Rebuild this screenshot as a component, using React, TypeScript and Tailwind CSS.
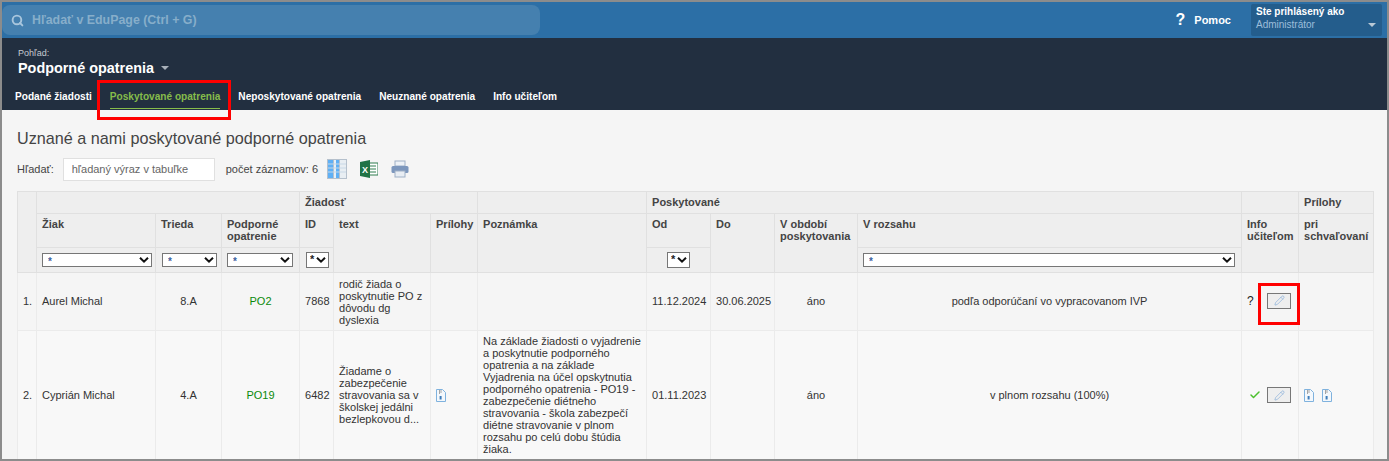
import React from 'react';
import { Search, Pencil, Check } from 'lucide-react';

const Caret = ({ className }: { className: string }) => (
  <span className={`inline-block w-0 h-0 border-x-[4px] border-x-transparent border-t-[4px] ${className}`} />
);

const FilterSelect = ({ className, narrow }: { className: string; narrow?: boolean }) => (
  <div className={`relative ${narrow ? 'h-[16px]' : 'h-[14px]'} ${className}`}>
    <select
      className={`appearance-none w-full h-full bg-white border border-[#767676] block leading-none outline-none ${
        narrow ? 'pl-[3px] pb-[2px] text-[11px] text-[#222]' : 'pl-[5px] pt-[3px] text-[10px] text-[#3b5fa0]'
      }`}
    >
      <option>*</option>
    </select>
    <svg className="absolute right-[3px] top-1/2 -translate-y-1/2 pointer-events-none" width="10" height="7" viewBox="0 0 10 7">
      <path d="M1 1.2l4 4 4-4" fill="none" stroke="#111" strokeWidth="2" />
    </svg>
  </div>
);

const AttachIcon = () => (
  <svg width="10" height="13" viewBox="0 0 10 13" className="inline-block">
    <path d="M.5.5h6l3 3v9h-9z" fill="#f4f8fc" stroke="#7fb2de" />
    <path d="M3.5 1v4M5 1v3" stroke="#a5a5a5" strokeWidth="1" />
    <rect x="3.6" y="7" width="2" height="3.5" fill="#3f7dba" />
  </svg>
);

const EditButton = () => (
  <button className="w-[24px] h-[16px] border border-[#777] bg-[#eeeeee] inline-flex items-center justify-center">
    <Pencil size={11} strokeWidth={1.2} className="text-[#6f9fd4]" />
  </button>
);

const th = 'border border-[#e0e0e0] bg-[#eeeeee] text-left align-top font-bold text-[#444] px-[5px] pt-[4px] leading-[12px]';
const td = 'border border-[#ebebeb] px-[5px] align-middle leading-[12px]';
const tdUp = `${td} pb-[2px]`;

const App = () => {
  return (
    <div className="w-[1389px] h-[461px] overflow-hidden border-2 border-[#8c8c8c] bg-[#f5f5f5] flex flex-col font-['Liberation_Sans',Arial,sans-serif] text-[11px] text-[#333]">
      {/* top bar */}
      <div className="h-[36px] shrink-0 bg-[#2c6fa6] flex items-center pr-[5px]">
        <div className="w-[538px] h-[30px] rounded-[8px] bg-[#4580af] flex items-center pl-[9px] gap-[8px]">
          <Search size={13} strokeWidth={3.5} className="text-[#a9c6dd]" />
          <span className="text-[#87aeca] font-bold text-[12.4px]">Hľadať v EduPage (Ctrl + G)</span>
        </div>
        <div className="ml-auto flex items-center gap-[9px] mr-[20px] text-white font-bold">
          <span className="text-[16px] leading-none">?</span>
          <span className="text-[11px]">Pomoc</span>
        </div>
        <div className="w-[131px] h-[32px] bg-[#245d8c] rounded-[2px] px-[5px] pt-[1px]">
          <div className="text-white font-bold text-[10px] leading-[13px]">Ste prihlásený ako</div>
          <div className="text-[#9dbedb] text-[10px] leading-[14px] flex items-center justify-between pr-[1px]">
            Administrátor
            <Caret className="border-t-[#b9c9d6]" />
          </div>
        </div>
      </div>

      {/* view header */}
      <div className="h-[72px] shrink-0 bg-[#222f40] pt-[10px] text-white">
        <div className="pl-[16px] text-[#c5cad0] text-[9px] leading-[11px]">Pohľad:</div>
        <div className="pl-[16px] flex items-center gap-[7px] font-bold text-[14.4px] leading-[18px]">
          Podporné opatrenia
          <Caret className="border-t-[#a8b0b9]" />
        </div>
        <div className="flex items-start gap-[18px] pl-[13px] mt-[11px] font-bold text-[10.1px]">
          <span className="leading-[18px]">Podané žiadosti</span>
          <span className="leading-[18px] h-[21px] border-b border-[#86bc4b] text-[#86bc4b]">Poskytované opatrenia</span>
          <span className="leading-[18px]">Neposkytované opatrenia</span>
          <span className="leading-[18px]">Neuznané opatrenia</span>
          <span className="leading-[18px]">Info učiteľom</span>
        </div>
      </div>

      {/* content */}
      <div className="flex-1 pl-[15px] pt-[17px]">
        <h1 className="text-[16.2px] leading-[22px] text-[#444]">Uznané a nami poskytované podporné opatrenia</h1>
        <div className="flex items-center mt-[8px] h-[24px] text-[#444]">
          <span>Hľadať:</span>
          <input
            className="ml-[9px] w-[152px] h-[23px] bg-white border border-[#e0e0e0] px-[8px] text-[11px] placeholder:text-[#666] outline-none"
            placeholder="hľadaný výraz v tabuľke"
          />
          <span className="ml-[11px]">počet záznamov: 6</span>
          <svg width="20" height="20" viewBox="0 0 20 20" className="ml-[9px]">
            <rect width="20" height="20" fill="#b5c0cc" />
            <rect x="1" y="1" width="5" height="18" fill="#5fb0f5" />
            <rect x="7" y="1" width="5" height="18" fill="#e6f0f8" />
            <rect x="9" y="1" width="3" height="18" fill="#5fb0f5" />
            <rect x="13" y="1" width="6" height="18" fill="#e8eef3" />
            <path d="M1 5h18M1 9h18M1 13h18" stroke="#c8d8e6" />
          </svg>
          <svg width="18" height="18" viewBox="0 0 18 18" className="ml-[13px]">
            <rect x="7" y="3" width="11" height="12" fill="#fff" stroke="#2e7d4f" />
            <path d="M10 6h6M10 9h6M10 12h6" stroke="#2e7d4f" />
            <path d="M0 2l10-2v18L0 16z" fill="#217346" />
            <text x="2" y="12.5" fontSize="9" fontWeight="bold" fill="#fff">X</text>
          </svg>
          <svg width="18" height="18" viewBox="0 0 18 18" className="ml-[13px]">
            <rect x="4" y="1" width="10" height="5" fill="#eef2f7" stroke="#9fb0c6" />
            <rect x="0.5" y="6" width="17" height="7" rx="1.5" fill="#7d97bd" />
            <rect x="4" y="11" width="10" height="6" fill="#e8edf3" stroke="#9fb0c6" />
          </svg>
        </div>

        <table className="table-fixed border-collapse w-[1356px] mt-[10px] bg-[#f5f5f5]">
          <colgroup>
            <col className="w-[19px]" />
            <col className="w-[119px]" />
            <col className="w-[66px]" />
            <col className="w-[78px]" />
            <col className="w-[34px]" />
            <col className="w-[97px]" />
            <col className="w-[47px]" />
            <col className="w-[169px]" />
            <col className="w-[64px]" />
            <col className="w-[64px]" />
            <col className="w-[83px]" />
            <col className="w-[384px]" />
            <col className="w-[57px]" />
            <col className="w-[75px]" />
          </colgroup>
          <thead>
            <tr className="h-[22px]">
              <th rowSpan={3} className={th}></th>
              <th colSpan={3} className={th}></th>
              <th colSpan={3} className={th}>Žiadosť</th>
              <th className={th}></th>
              <th colSpan={4} className={th}>Poskytované</th>
              <th className={th}></th>
              <th className={th}>Prílohy</th>
            </tr>
            <tr className="h-[34px]">
              <th className={th}>Žiak</th>
              <th className={th}>Trieda</th>
              <th className={th}>Podporné opatrenie</th>
              <th className={th}>ID</th>
              <th rowSpan={2} className={th}>text</th>
              <th rowSpan={2} className={th}>Prílohy</th>
              <th rowSpan={2} className={th}>Poznámka</th>
              <th className={th}>Od</th>
              <th rowSpan={2} className={th}>Do</th>
              <th rowSpan={2} className={th}>V období poskytovania</th>
              <th className={th}>V rozsahu</th>
              <th rowSpan={2} className={th}>Info učiteľom</th>
              <th rowSpan={2} className={th}>pri schvaľovaní</th>
            </tr>
            <tr className="h-[25px]">
              <th className="border border-[#e0e0e0] bg-[#eeeeee]"><FilterSelect className="w-[110px] ml-[5px]" /></th>
              <th className="border border-[#e0e0e0] bg-[#eeeeee]"><FilterSelect className="w-[55px] ml-[6px]" /></th>
              <th className="border border-[#e0e0e0] bg-[#eeeeee]"><FilterSelect className="w-[66px] ml-[5px]" /></th>
              <th className="border border-[#e0e0e0] bg-[#eeeeee]"><FilterSelect narrow className="w-[23px] ml-[6px]" /></th>
              <th className="border border-[#e0e0e0] bg-[#eeeeee]"><FilterSelect narrow className="w-[23px] ml-[20px]" /></th>
              <th className="border border-[#e0e0e0] bg-[#eeeeee]"><FilterSelect className="w-[372px] ml-[5px]" /></th>
            </tr>
          </thead>
          <tbody>
            <tr className="h-[58px] bg-[#f5f5f5]">
              <td className={tdUp}>1.</td>
              <td className={tdUp}>Aurel Michal</td>
              <td className={`${tdUp} text-center`}>8.A</td>
              <td className={`${tdUp} text-center text-[#0a8a0a]`}>PO2</td>
              <td className={tdUp}>7868</td>
              <td className={td}>rodič žiada o poskytnutie PO z dôvodu dg dyslexia</td>
              <td className={td}></td>
              <td className={td}></td>
              <td className={tdUp}>11.12.2024</td>
              <td className={tdUp}>30.06.2025</td>
              <td className={`${tdUp} text-center`}>áno</td>
              <td className={`${tdUp} text-center`}>podľa odporúčaní vo vypracovanom IVP</td>
              <td className={tdUp}>
                <div className="flex items-center justify-between pr-[2px]">
                  <span className="text-[12px] text-[#222]">?</span>
                  <EditButton />
                </div>
              </td>
              <td className={td}></td>
            </tr>
            <tr className="bg-[#f8f8f8]">
              <td className={td}>2.</td>
              <td className={td}>Cyprián Michal</td>
              <td className={`${td} text-center`}>4.A</td>
              <td className={`${td} text-center text-[#0a8a0a]`}>PO19</td>
              <td className={td}>6482</td>
              <td className={td}>Žiadame o zabezpečenie stravovania sa v školskej jedálni bezlepkovou d...</td>
              <td className={td}><AttachIcon /></td>
              <td className={`${td} py-[4px]`}>
                Na základe žiadosti o vyjadrenie a poskytnutie podporného opatrenia a na základe Vyjadrenia na účel opskytnutia podporného opatrenia - PO19 - zabezpečenie diétneho stravovania - škola zabezpečí diétne stravovanie v plnom rozsahu po celú dobu štúdia žiaka.
              </td>
              <td className={td}>01.11.2023</td>
              <td className={td}></td>
              <td className={`${td} text-center`}>áno</td>
              <td className={`${td} text-center`}>v plnom rozsahu (100%)</td>
              <td className={td}>
                <div className="flex items-center justify-between pr-[2px]">
                  <Check size={12} strokeWidth={3} className="text-[#4cc02e] ml-[2px]" />
                  <EditButton />
                </div>
              </td>
              <td className={td}>
                <div className="flex gap-[8px]">
                  <AttachIcon />
                  <AttachIcon />
                </div>
              </td>
            </tr>
          </tbody>
        </table>
      </div>

      {/* annotation marks */}
      <div className="absolute left-[97px] top-[80px] w-[134px] h-[40px] border-[3px] border-[#ff0000] pointer-events-none" />
      <div className="absolute left-[1258px] top-[283px] w-[42px] h-[42px] border-[3px] border-[#ff0000] pointer-events-none" />
    </div>
  );
};

export default App;
